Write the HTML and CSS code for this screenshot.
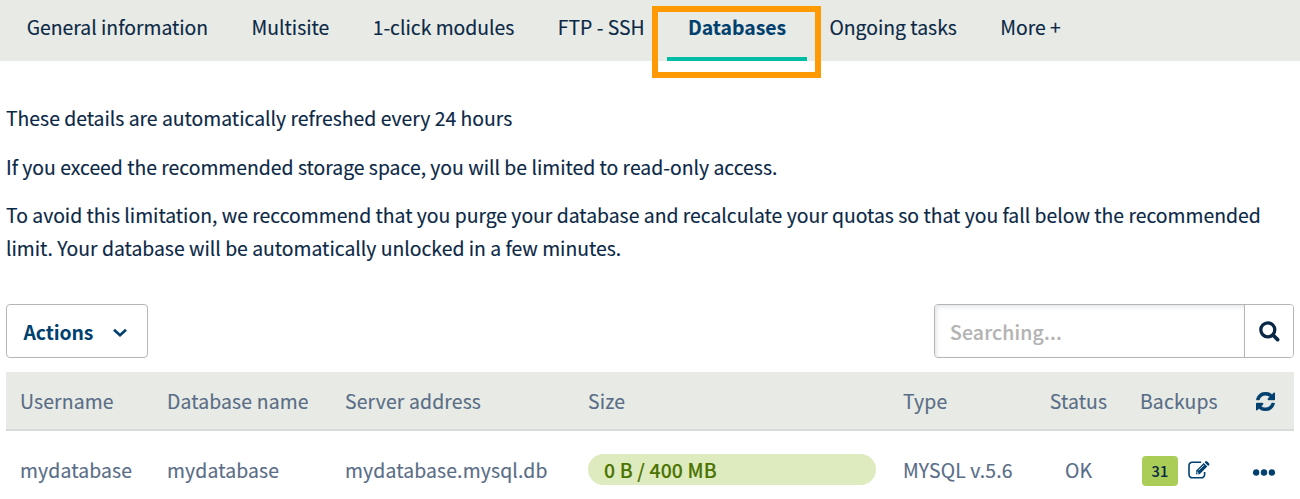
FILE: index.html
```html
<!DOCTYPE html>
<html lang="en">
<head>
<meta charset="utf-8">
<title>Databases</title>
<link rel="stylesheet" href="styles.css">
</head>
<body>
<nav class="tabs">
  <a class="tab">General information</a>
  <a class="tab">Multisite</a>
  <a class="tab">1-click modules</a>
  <a class="tab">FTP - SSH</a>
  <a class="tab tab-active">Databases</a>
  <a class="tab">Ongoing tasks</a>
  <a class="tab">More +</a>
</nav>
<main class="content">
  <section class="intro">
    <p>These details are automatically refreshed every 24 hours</p>
    <p>If you exceed the recommended storage space, you will be limited to read-only access.</p>
    <p>To avoid this limitation, we reccommend that you purge your database and recalculate your quotas so that you fall below the recommended<br>limit. Your database will be automatically unlocked in a few minutes.</p>
  </section>
  <div class="toolbar">
    <button class="actions">Actions
      <svg class="chevron" width="16" height="10" viewBox="0 0 16 10"><path d="M2 1.800 8 7.200 14 1.800" fill="none" stroke="#00406f" stroke-width="2.700"/></svg>
    </button>
    <div class="search">
      <div class="search-field">Searching...</div>
      <button class="search-button">
        <svg width="21" height="21" viewBox="0 0 21 21"><g fill="none" stroke="#0b2846"><circle cx="8.800" cy="8.800" r="7" stroke-width="3.300"/><path d="M14 14l4.600 4.600" stroke-width="3.700" stroke-linecap="round"/></g></svg>
      </button>
    </div>
  </div>
  <table class="grid">
    <colgroup><col class="c-user"><col class="c-name"><col class="c-server"><col class="c-size"><col class="c-type"><col class="c-status"><col class="c-backups"><col class="c-menu"></colgroup>
    <thead>
      <tr>
        <th>Username</th><th>Database name</th><th>Server address</th><th>Size</th><th>Type</th><th class="center">Status</th><th>Backups</th>
        <th class="center icon-cell"><svg class="refresh" width="19" height="19" viewBox="0 0 1536 1536"><path fill="#00406f" stroke="#00406f" stroke-width="40" d="M1511 928q0 5-1 7-64 268-268 434.500T764 1536q-146 0-282.500-55T238 1324l-129 129q-19 19-45 19t-45-19-19-45V960q0-26 19-45t45-19h448q26 0 45 19t19 45-19 45l-137 137q71 66 161 102t187 36q134 0 250-65t186-179q11-17 53-117 8-23 30-23h192q13 0 22.500 9.500t9.500 22.500zm25-800v448q0 26-19 45t-45 19h-448q-26 0-45-19t-19-45 19-45l138-138Q969 256 768 256q-134 0-250 65T332 500q-11 17-53 117-8 23-30 23H50q-13 0-22.500-9.500T18 608v-7q65-268 270-434.500T768 0q146 0 284 55.500T1297 212l130-129q19-19 45-19t45 19 19 45z"/></svg></th>
      </tr>
    </thead>
    <tbody>
      <tr>
        <td>mydatabase</td><td>mydatabase</td><td>mydatabase.mysql.db</td>
        <td><div class="quota">0 B / 400 MB</div></td>
        <td>MYSQL v.5.6</td><td class="center">OK</td>
        <td><div class="backups"><span class="badge">31</span><svg class="edit" width="22" height="18" viewBox="0 0 22 18"><path d="M13.200 1.200H4.200A3.200 3.200 0 0 0 1 4.400V13.600A3.200 3.200 0 0 0 4.200 16.800H13.400A3.200 3.200 0 0 0 16.600 13.600V11" fill="none" stroke="#00406f" stroke-width="1.600"/><path d="M8 9.700 15.700 2 19.300 5.600 11.600 13.300H8zM16.600 1.200l.9-.9q.9-.6 1.700.2l1.800 1.800q.8.8.1 1.700l-.9.900z" fill="#00406f"/><path d="M10.600 9.300 15.800 4.100M9 10.400V12.200H10.700" fill="none" stroke="#fff" stroke-width=".8"/></svg></div></td>
        <td class="center icon-cell"><svg class="dots" width="22" height="7" viewBox="0 0 22 7" fill="#00406f"><circle cx="3.100" cy="3.500" r="3.200"/><circle cx="11" cy="3.500" r="3.200"/><circle cx="18.900" cy="3.500" r="3.200"/></svg></td>
      </tr>
    </tbody>
  </table>
</main>
</body>
</html>
```
FILE: styles.css
```css
* { box-sizing: border-box; }
body {
  margin: 0;
  background: #fff;
  color: #0b2846;
  font-family: "Noto Sans CJK SC", "Open Sans", sans-serif;
  font-size: 19.38px;
  -webkit-text-stroke: .15px;
  overflow: hidden;
}
svg { display: block; }
.tabs {
  display: flex;
  height: 61px;
  padding-left: 5px;
  background: #e8ebe5;
}
.tab {
  position: relative;
  padding: 0 21.7px;
  line-height: 55px;
  white-space: nowrap;
}
.tab-active {
  margin: 0 .7px;
  padding: 0 21px;
  color: #00406f;
  font-weight: 700;
  border-bottom: 4px solid #00bda5;
}
.tab-active::after {
  content: "";
  position: absolute;
  box-sizing: border-box;
  top: 6px;
  left: -15px;
  right: -14px;
  height: 72px;
  border: 6px solid #ff9a05;
}
.content { padding: 41px 6px 0; }
.intro p {
  margin: 0 0 16.3px;
  line-height: 32.4px;
  white-space: nowrap;
}
.toolbar {
  display: flex;
  justify-content: space-between;
  margin-top: 40px;
  height: 54px;
}
button {
  font: inherit;
  background: #fff;
  margin: 0;
}
.actions {
  display: flex;
  align-items: center;
  justify-content: space-between;
  width: 142px;
  padding: 1px 19px 0 16.5px;
  border: 1px solid #b5b5b5;
  border-radius: 4px;
  color: #00406f;
  font-weight: 700;
  letter-spacing: -.1px;
  -webkit-text-stroke: 0;
}
.chevron { margin-top: 2px; }
.search {
  display: flex;
  width: 360px;
  border: 1px solid #b5b5b5;
  border-radius: 4px;
  overflow: hidden;
}
.search-field {
  flex: 1;
  padding-left: 15px;
  line-height: 54px;
  color: #b3b3b3;
  font-weight: 500;
  letter-spacing: .2px;
  box-shadow: inset 2px 2px 4px #e3e7ea;
}
.search-button {
  width: 49px;
  padding: 0 0 0 14px;
  border: 0;
  border-left: 1px solid #b5b5b5;
}
.grid {
  width: 1288px;
  margin-top: 14px;
  table-layout: fixed;
  border-collapse: separate;
  border-spacing: 0;
  color: #596d87;
  letter-spacing: .15px;
}
.c-user { width: 147px; }
.c-name { width: 178px; }
.c-server { width: 243px; }
.c-size { width: 315px; }
.c-type { width: 142px; }
.c-status { width: 95px; }
.c-backups { width: 109px; }
.c-menu { width: 59px; }
th, td {
  height: 59px;
  padding: 0 0 0 14px;
  font-weight: 400;
  text-align: left;
  vertical-align: middle;
  white-space: nowrap;
}
th {
  background: #e8ebe5;
  border-bottom: 2px solid #d9dbdb;
}
td { height: 76px; padding-top: 1px; }
.center { padding-left: 0; text-align: center; }
.icon-cell svg { margin: 0 auto; }
.icon-cell .refresh { position: relative; top: 1px; left: .5px; }
.icon-cell .dots { position: relative; top: 3px; left: -1px; }
.quota {
  width: 288px;
  height: 31px;
  padding-left: 16px;
  border-radius: 16px;
  background: #deebbf;
  color: #4b7300;
  font-weight: 500;
  line-height: 32px;
}
.backups { display: flex; align-items: center; padding: 3px 0 0 2px; }
.badge {
  width: 36px;
  height: 30px;
  border-radius: 4px;
  background: #a9cd57;
  color: #0b2846;
  font-size: 14.5px;
  font-weight: 500;
  line-height: 29px;
  text-align: center;
}
.edit { margin: -3px 0 0 10px; }
```
